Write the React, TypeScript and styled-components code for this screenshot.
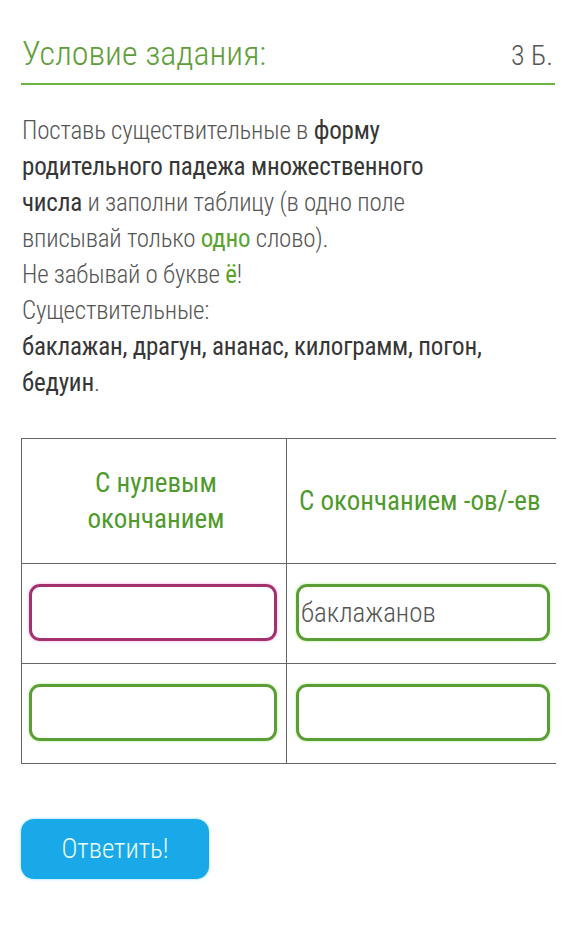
import React from 'react';
import styled, { createGlobalStyle } from 'styled-components';

const GlobalStyle = createGlobalStyle`
  body {
    margin: 0;
    background: #fff;
    font-family: 'Roboto Condensed', Roboto, 'Noto Sans', sans-serif;
  }
`;

const Page = styled.div`
  padding: 31px 21px 40px 21px;
  width: 576px;
  box-sizing: border-box;
`;

const Header = styled.div`
  display: flex;
  align-items: baseline;
  justify-content: space-between;
  padding: 0 2px 8px 1px;
  border-bottom: 2px solid #6db33f;
`;

const Title = styled.h1`
  margin: 0;
  font-size: 34px;
  line-height: 44px;
  font-weight: 300;
  color: #5e9e3a;
`;

const Points = styled.span`
  font-size: 28px;
  font-weight: 300;
  color: #555;
`;

const Task = styled.p`
  margin: 28px 0 0 1px;
  font-size: 25px;
  line-height: 36px;
  font-weight: 300;
  color: #555;
  letter-spacing: -0.2px;
`;

const Strong = styled.b<{ $green?: boolean }>`
  font-weight: 400;
  color: ${(p) => (p.$green ? '#5aa32d' : '#363636')};
`;

const TableWrap = styled.div`
  margin-top: 37px;
  width: 535px;
  overflow: hidden;
`;

const Table = styled.table`
  border-collapse: collapse;
  table-layout: fixed;
  width: 620px;
`;

const HeadCell = styled.th<{ $w: number }>`
  box-sizing: border-box;
  width: ${(p) => p.$w}px;
  height: 125px;
  border: 1px solid #666;
  padding: 0 8px 0 12px;
  font-size: 27px;
  line-height: 36px;
  font-weight: 400;
  color: #4f9a2c;
  text-align: left;
  &:first-child {
    text-align: center;
  }
`;

const Cell = styled.td`
  box-sizing: border-box;
  height: 100px;
  border: 1px solid #666;
  padding: 0 8px 2px 7px;
  &:last-child {
    padding-left: 9px;
  }
`;

const Field = styled.div<{ $wrong?: boolean; $w: number }>`
  box-sizing: border-box;
  width: ${(p) => p.$w}px;
  height: 57px;
  border: 3px solid ${(p) => (p.$wrong ? '#a3306f' : '#5c9e36')};
  border-radius: 11px;
  box-shadow: 0 0 3px ${(p) => (p.$wrong ? '#f2a6da' : '#b4eb8f')};
  padding: 0 2px;
  display: flex;
  align-items: center;
  font-size: 27px;
  font-weight: 300;
  color: #555;
`;

const Button = styled.button`
  margin-top: 55px;
  width: 188px;
  height: 60px;
  border: none;
  border-radius: 13px;
  background: #1aa9e8;
  color: #e9fbff;
  font-family: inherit;
  font-size: 27px;
  font-weight: 300;
  box-shadow: 0 0 3px #7fd6ff;
`;

export default function App() {
  return (
    <Page>
      <GlobalStyle />
      <Header>
        <Title>Условие задания:</Title>
        <Points>3 Б.</Points>
      </Header>
      <Task>
        Поставь существительные в <Strong>форму</Strong>
        <br />
        <Strong>родительного падежа множественного</Strong>
        <br />
        <Strong>числа</Strong> и заполни таблицу (в одно поле
        <br />
        вписывай только <Strong $green>одно</Strong> слово).
        <br />
        Не забывай о букве <Strong $green>ё</Strong>!
        <br />
        Существительные:
        <br />
        <Strong>баклажан, драгун, ананас, килограмм, погон,</Strong>
        <br />
        <Strong>бедуин</Strong>.
      </Task>
      <TableWrap>
        <Table>
          <thead>
            <tr>
              <HeadCell $w={265}>
                С нулевым
                <br />
                окончанием
              </HeadCell>
              <HeadCell $w={355}>С окончанием -ов/-ев</HeadCell>
            </tr>
          </thead>
          <tbody>
            <tr>
              <Cell>
                <Field $wrong $w={248} />
              </Cell>
              <Cell>
                <Field $w={254}>баклажанов</Field>
              </Cell>
            </tr>
            <tr>
              <Cell>
                <Field $w={248} />
              </Cell>
              <Cell>
                <Field $w={254} />
              </Cell>
            </tr>
          </tbody>
        </Table>
      </TableWrap>
      <Button>Ответить!</Button>
    </Page>
  );
}
